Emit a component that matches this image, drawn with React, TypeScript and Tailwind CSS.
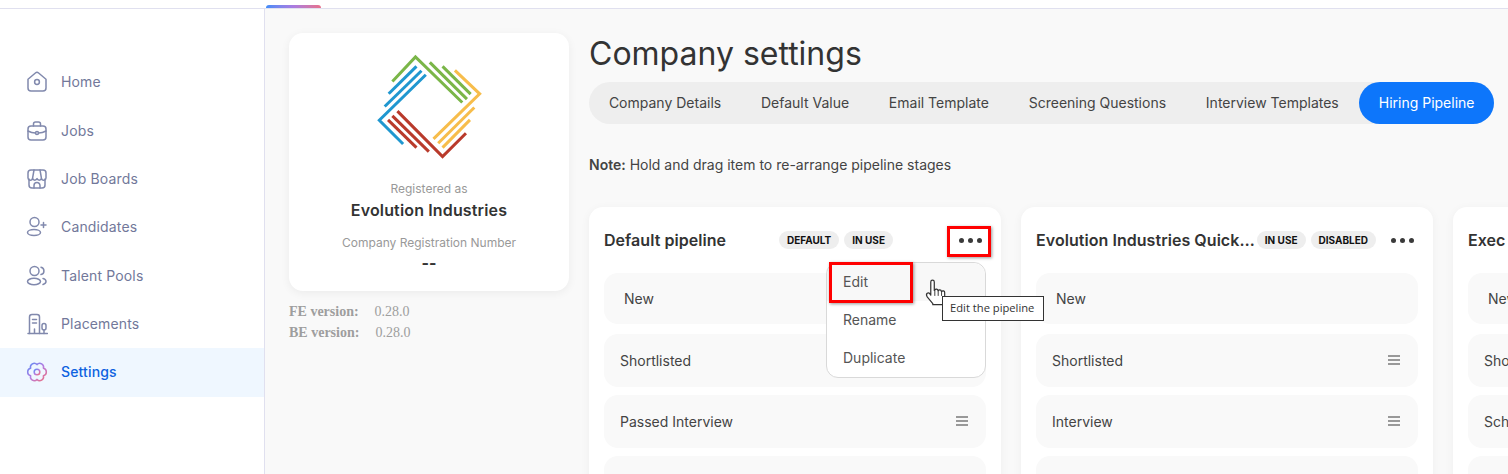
import React from 'react';

const stages1 = ['Shortlisted', 'Passed Interview', ''];
const stages2 = ['Shortlisted', 'Interview', ''];
const stages3 = ['Shortlisted', 'Schedule Interview', ''];

const tabs = ['Company Details', 'Default Value', 'Email Template', 'Screening Questions', 'Interview Templates'];

function NavIcon({ name }: { name: string }) {
  const stroke = name === 'Settings' ? 'url(#settingsGrad)' : '#8189ad';
  return (
    <svg width="22" height="22" viewBox="0 0 22 22" fill="none" stroke={stroke} strokeWidth="1.5" strokeLinecap="round" strokeLinejoin="round">
      <defs>
        <linearGradient id="settingsGrad" x1="0" y1="0" x2="1" y2="1">
          <stop offset="0" stopColor="#5b8cf5" />
          <stop offset="0.5" stopColor="#b57be0" />
          <stop offset="1" stopColor="#f0707a" />
        </linearGradient>
      </defs>
      {name === 'Home' && (
        <>
          <path d="M2 8.2 9.4 2a2.5 2.5 0 0 1 3.2 0L20 8.2V17a3 3 0 0 1-3 3H5a3 3 0 0 1-3-3Z" />
          <circle cx="11" cy="11" r="2.4" />
        </>
      )}
      {name === 'Jobs' && (
        <>
          <rect x="2" y="6" width="18" height="14" rx="3" />
          <path d="M7.5 6V4a2 2 0 0 1 2-2h3a2 2 0 0 1 2 2v2" />
          <path d="M2 11c2.5 1.4 5 2 7.5 2M20 11c-2.5 1.4-5 2-7.5 2" />
          <circle cx="11" cy="13" r="1.5" />
        </>
      )}
      {name === 'Job Boards' && (
        <>
          <path d="M3 11v6a3 3 0 0 0 3 3h10a3 3 0 0 0 3-3v-6" />
          <path d="M5 2h12a3 3 0 0 1 3 3v5a2.3 2.3 0 0 1-4.5.6 2.4 2.4 0 0 1-4.5 0 2.4 2.4 0 0 1-4.5 0A2.3 2.3 0 0 1 2 10V5a3 3 0 0 1 3-3Z" />
          <path d="M6.500 10.600 8 2M15.500 10.600 14 2" />
          <path d="M8 20v-2.500a3 3 0 0 1 6 0V20" />
        </>
      )}
      {name === 'Candidates' && (
        <>
          <circle cx="8.500" cy="6" r="4.500" />
          <ellipse cx="8" cy="16.500" rx="6.500" ry="3" />
          <path d="M17.500 6.500v5M15 9h5" />
        </>
      )}
      {name === 'Talent Pools' && (
        <>
          <circle cx="8.500" cy="6" r="4.500" />
          <ellipse cx="8" cy="16.500" rx="6.500" ry="3.200" />
          <path d="M15 2.200a3.800 3.800 0 0 1 0 7.400M17 13.500c2 .5 3 1.600 3 3s-1 2.400-3 3" />
        </>
      )}
      {name === 'Placements' && (
        <>
          <path d="M2 20.500h19.500" />
          <path d="M3.500 20.500V4A2.500 2.500 0 0 1 6 1.500h5A2.500 2.500 0 0 1 13.500 4v16.500" />
          <path d="M6.500 6.500h4M6.500 10h4M8.500 20v-4" />
          <rect x="16" y="10.500" width="4" height="6.500" rx="2" />
          <path d="M18 17v3.500" />
        </>
      )}
      {name === 'Settings' && (
        <>
          <path d="M11 3.600A3.800 3.800 0 0 1 17.400 7.300 3.800 3.800 0 0 1 17.400 14.700 3.800 3.800 0 0 1 11 18.400 3.800 3.800 0 0 1 4.600 14.700 3.800 3.800 0 0 1 4.600 7.300 3.800 3.800 0 0 1 11 3.600Z" />
          <circle cx="11" cy="11" r="2.800" />
        </>
      )}
    </svg>
  );
}

function Logo() {
  return (
    <svg viewBox="104 40 320 320" className="w-[107px] h-[107px] mx-auto" fill="none" strokeWidth="9" strokeLinecap="butt" strokeLinejoin="miter">
      <g stroke="#7ab648">
        <path d="M153 125 222 52 362 188" />
        <path d="M265 68 376 178" />
        <path d="M303 80 387 163" />
      </g>
      <g stroke="#f7bd4b">
        <path d="M340 92 414 162 276 297" />
        <path d="M398 203 290 310" />
        <path d="M385 240 303 323" />
      </g>
      <g stroke="#b93a2b">
        <path d="M373 280 303 350 168 214" />
        <path d="M153 228 262 335" />
        <path d="M140 240 225 323" />
      </g>
      <g stroke="#1f97d0">
        <path d="M185 312 114 241 253 105" />
        <path d="M240 93 130 200" />
        <path d="M225 80 142 162" />
      </g>
    </svg>
  );
}

function Badge({ children }: { children: React.ReactNode }) {
  return (
    <span className="h-[18px] flex items-center px-2 rounded-full bg-[#eeeeee] text-[10px] font-bold text-[#111111] whitespace-nowrap shrink-0">
      {children}
    </span>
  );
}

function Dots() {
  return (
    <span className="flex gap-1 shrink-0 w-[23px]">
      <span className="w-[5px] h-[5px] rounded-full bg-[#3a3a3a]" />
      <span className="w-[5px] h-[5px] rounded-full bg-[#3a3a3a]" />
      <span className="w-[5px] h-[5px] rounded-full bg-[#3a3a3a]" />
    </span>
  );
}

function Grip() {
  return (
    <span className="flex flex-col gap-[2px] w-3 shrink-0">
      <span className="h-[2px] bg-[#999999]" />
      <span className="h-[2px] bg-[#999999]" />
      <span className="h-[2px] bg-[#999999]" />
    </span>
  );
}

function PipelineCard({ title, badges, stages, spacer }: { title: string; badges: string[]; stages: string[]; spacer?: boolean }) {
  return (
    <div className="relative w-[412px] shrink-0 bg-white rounded-[14px] shadow-[0_2px_10px_rgba(0,0,0,0.05)] px-[15px] pt-[24px] pb-4">
      <div className="flex items-center h-[18px] mb-[24px]">
        <h3 className="flex-1 min-w-0 truncate text-base font-semibold text-[#333333] tracking-[0.05px]">{title}</h3>
        <div className="flex gap-[5px] mr-[15px]">
          {badges.map((b) => (
            <Badge key={b}>{b}</Badge>
          ))}
          {spacer && <span className="w-[46px]" />}
        </div>
        <span className="mr-1">
          <Dots />
        </span>
      </div>
      <div className="h-[51px] rounded-[14px] bg-[#f9f9f9] flex items-center px-5 text-sm text-[#444444] mb-[10px]">New</div>
      <div className="flex flex-col gap-[8.4px]">
        {stages.map((s, i) => (
          <div key={i} className="h-[52.700px] rounded-[14px] bg-[#f9f9f9] flex items-center justify-between pl-4 pr-[18px] text-sm text-[#444444]">
            <span className="mt-[2px]">{s}</span>
            {s && <Grip />}
          </div>
        ))}
      </div>
    </div>
  );
}

function HandCursor() {
  return (
    <svg className="absolute left-[924px] top-[279px]" width="23" height="27" viewBox="0 0 17 20" fill="#ffffff" stroke="#333333" strokeWidth="0.9" strokeLinejoin="round">
      <path d="M5 2.200a1.300 1.300 0 0 1 2.600 0V8.500l.4-.3a1.200 1.200 0 0 1 2.300.300l.2.300a1.200 1.200 0 0 1 2.300.300l.2.400a1.200 1.200 0 0 1 2.300.600V14c0 1.800-.5 3-1.200 4v1H6.500v-.8L2.500 13.400c-.9-1.300-.8-2.300-.1-2.800.7-.5 1.500-.2 2.100.6L5 12Z" />
      <path d="M8 8.500v4M10.500 9v3.500M13 9.700v2.800" fill="none" strokeWidth="0.7" />
    </svg>
  );
}

export default function App() {
  return (
    <div className="relative w-[1508px] h-[474px] overflow-hidden bg-white text-[#333333] font-['Inter','Noto_Sans',sans-serif]">
      {/* top bar */}
      <div className="relative h-[9px] bg-white border-b border-[#e0e0ef]">
        <div className="absolute left-[266px] top-[5px] w-[55px] h-[3px] rounded-t-sm bg-gradient-to-r from-[#3d8bf8] via-[#a97be0] to-[#e8708a]" />
      </div>

      <div className="flex h-[465px]">
        {/* sidebar */}
        <aside className="w-[265px] shrink-0 border-r border-[#e0e0ef] pt-[49.120px]">
          {['Home', 'Jobs', 'Job Boards', 'Candidates', 'Talent Pools', 'Placements', 'Settings'].map((item) => (
            <div
              key={item}
              className={`h-[48.350px] flex items-center pl-[26px] gap-[13px] text-sm tracking-[0.15px] ${
                item === 'Settings' ? 'bg-[#eff7ff] text-[#0d62e0] font-medium' : 'text-[#72789a]'
              }`}
            >
              <NavIcon name={item} />
              <span>{item}</span>
            </div>
          ))}
        </aside>

        {/* content */}
        <main className="flex-1 min-w-0 bg-[#f9f9f9] flex pl-6 pt-6 gap-5 overflow-hidden">
          <div className="w-[280px] shrink-0">
            <div className="h-[258px] bg-white rounded-[14px] shadow-[0_2px_10px_rgba(0,0,0,0.06)] pt-[20px] text-center">
              <Logo />
              <p className="mt-[21px] text-xs leading-[16px] text-[#999999]">Registered as</p>
              <p className="mt-[3px] text-base leading-[20px] font-semibold text-[#333333] tracking-[0.15px]">Evolution Industries</p>
              <p className="mt-[15px] text-xs leading-[16px] text-[#999999]">Company Registration Number</p>
              <p className="mt-[2px] text-base leading-[20px] font-bold text-[#333333]">--</p>
            </div>
            <div className="mt-[10px] font-['Liberation_Serif',serif] text-sm leading-[21px] text-[#9e9e9e]">
              <p>
                <b className="mr-4">FE version:</b>0.28.0
              </p>
              <p>
                <b className="mr-4">BE version:</b>0.28.0
              </p>
            </div>
          </div>

          <div className="flex-1 min-w-0">
            <h1 className="pt-px text-[32px] leading-[40px] font-normal text-[#333333]">Company settings</h1>
            <div className="mt-2 w-[905px] h-[42px] rounded-full bg-[#eeeeee] flex items-center text-sm text-[#444444]">
              {tabs.map((t) => (
                <span key={t} className="px-[19.9px] whitespace-nowrap">
                  {t}
                </span>
              ))}
              <span className="ml-auto h-[42px] px-[19.5px] rounded-full bg-[#0d76fb] text-white flex items-center whitespace-nowrap">Hiring Pipeline</span>
            </div>
            <p className="mt-[31px] text-sm leading-[20px] text-[#444444]">
              <b className="font-semibold">Note:</b> Hold and drag item to re-arrange pipeline stages
            </p>
            <div className="mt-[32px] flex gap-5">
              <PipelineCard title="Default pipeline" badges={['DEFAULT', 'IN USE']} stages={stages1} spacer />
              <PipelineCard title="Evolution Industries Quick Hire" badges={['IN USE', 'DISABLED']} stages={stages2} />
              <PipelineCard title="Exec Pipeline" badges={[]} stages={stages3} />
            </div>
          </div>
        </main>
      </div>

      {/* dropdown menu */}
      <div className="absolute left-[826px] top-[262px] w-[160px] h-[116px] rounded-xl border border-[#d9d9d9] bg-white text-sm text-[#555555]">
        <div className="h-[38px] flex items-center pl-4 bg-[#f8f8f8] rounded-t-xl">Edit</div>
        <div className="h-[38px] flex items-center pl-4">Rename</div>
        <div className="h-[38px] flex items-center pl-4">Duplicate</div>
      </div>

      {/* annotation boxes */}
      <div className="absolute left-[947px] top-[226px] w-[44px] h-[31px] border-[3px] border-[#ff0000] shadow-[1px_1px_3px_rgba(0,0,0,0.4)]" />
      <div className="absolute left-[829px] top-[262px] w-[84px] h-[41px] border-[3px] border-[#ff0000] shadow-[1px_1px_3px_rgba(0,0,0,0.4)]" />

      <HandCursor />

      {/* tooltip */}
      <div className="absolute left-[942px] top-[296px] w-[102px] h-[25px] bg-white border border-[#333333] flex items-center pl-[7px] text-[11.2px] text-[#333333] font-['Open_Sans',sans-serif] whitespace-nowrap">
        Edit the pipeline
      </div>
    </div>
  );
}
